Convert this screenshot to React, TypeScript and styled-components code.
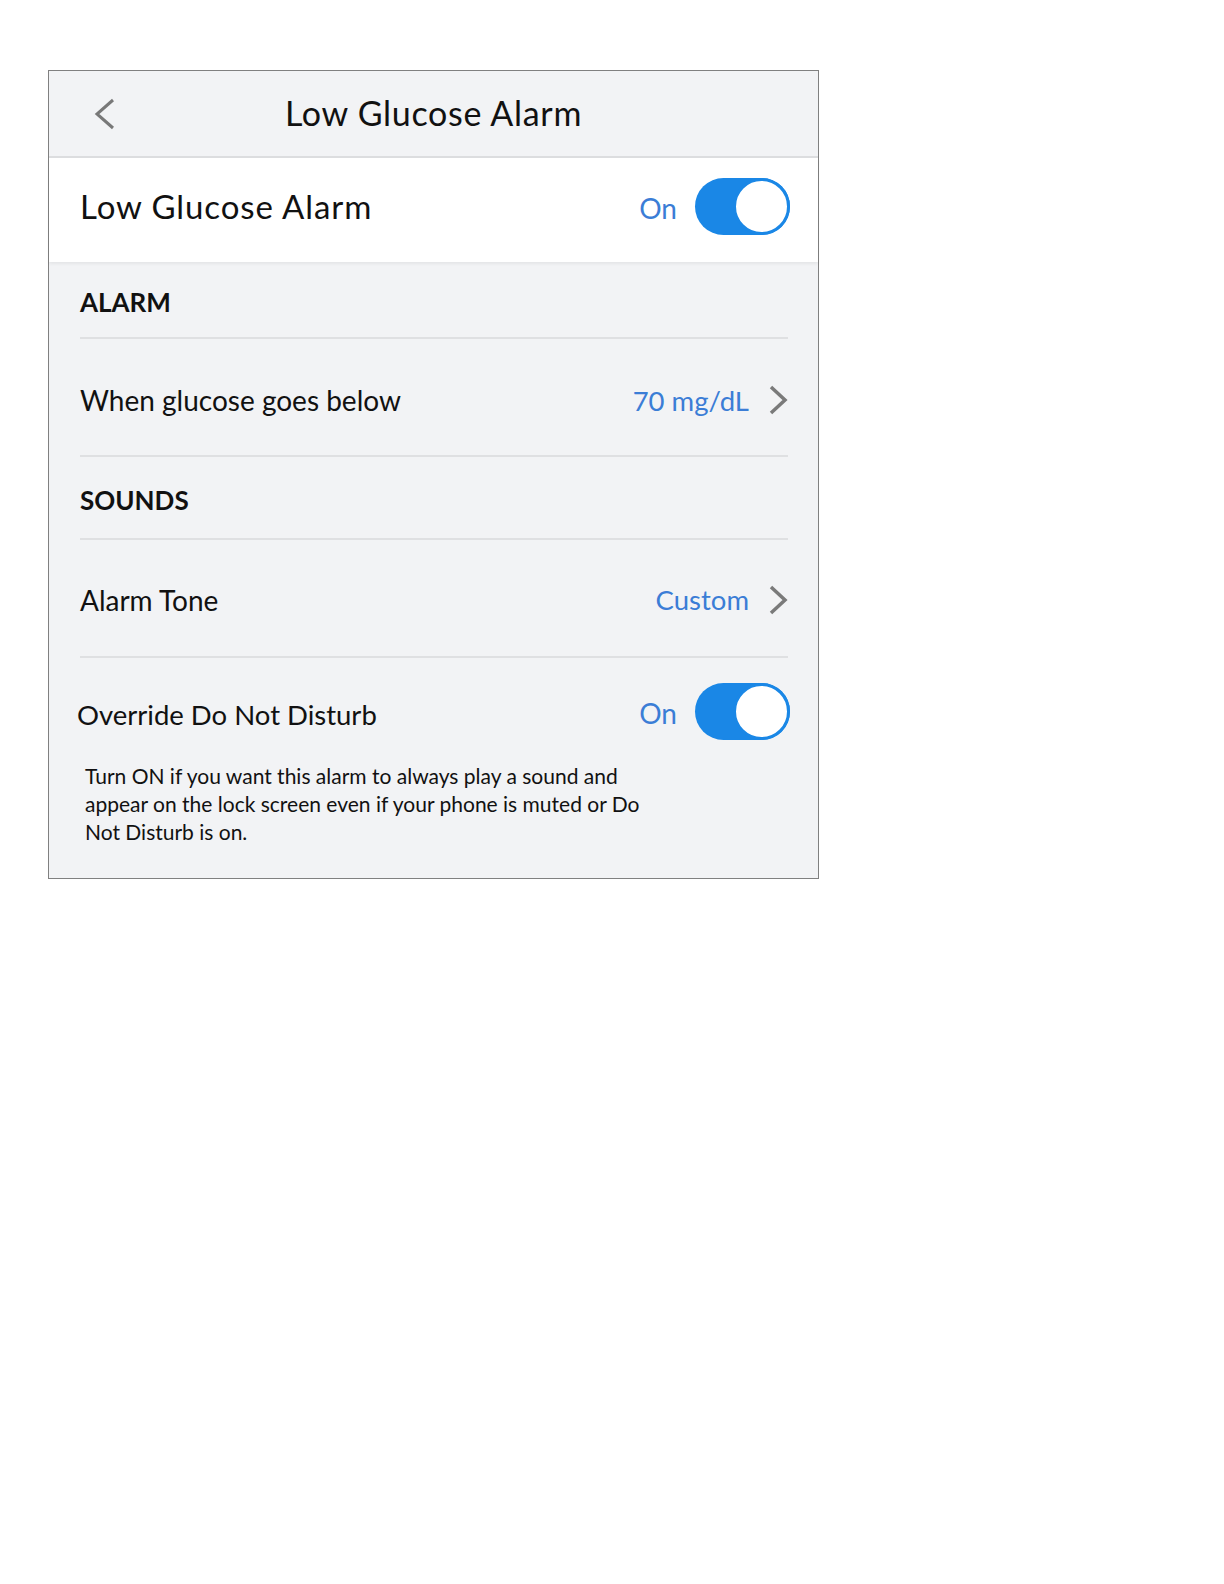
import styled, { createGlobalStyle } from "styled-components";

const GlobalStyle = createGlobalStyle`
  body {
    margin: 0;
    background: #ffffff;
    font-family: "Lato", "Open Sans", sans-serif;
    color: #111111;
  }
`;

function BackIcon() {
  return (
    <svg width="24" height="32" viewBox="0 0 24 32">
      <path d="M20 2 L4 16 L20 30" fill="none" stroke="#787878" strokeWidth="3" />
    </svg>
  );
}

function Chevron() {
  return (
    <svg width="20" height="30" viewBox="0 0 20 30">
      <path d="M3 2 L17 15 L3 28" fill="none" stroke="#7a7a7a" strokeWidth="3.5" />
    </svg>
  );
}

function Toggle({ label }: { label: string }) {
  return (
    <SwitchWrap>
      <OnLabel>{label}</OnLabel>
      <Track>
        <Knob />
      </Track>
    </SwitchWrap>
  );
}

export default function App() {
  return (
    <>
      <GlobalStyle />
      <Page>
        <Frame>
          <Header>
            <BackButton>
              <BackIcon />
            </BackButton>
            <Title>Low Glucose Alarm</Title>
          </Header>
          <MainRow>
            <MainLabel>Low Glucose Alarm</MainLabel>
            <Toggle label="On" />
          </MainRow>
          <Section>
            <SectionHead $height={75}>ALARM</SectionHead>
            <Divider />
            <LinkRow $height={116} $offset={6}>
              <RowLabel>When glucose goes below</RowLabel>
              <Value>
                <ValueText>70 mg/dL</ValueText>
                <Chevron />
              </Value>
            </LinkRow>
            <Divider />
            <SectionHead $height={81}>SOUNDS</SectionHead>
            <Divider />
            <LinkRow $height={116} $offset={3}>
              <RowLabel>Alarm Tone</RowLabel>
              <Value>
                <ValueText>Custom</ValueText>
                <Chevron />
              </Value>
            </LinkRow>
            <Divider />
            <OverrideBlock>
              <OverrideRow>
                <OverrideLabel>Override Do Not Disturb</OverrideLabel>
                <Toggle label="On" />
              </OverrideRow>
              <Description>
                Turn ON if you want this alarm to always play a sound and appear on the lock
                screen even if your phone is muted or Do Not Disturb is on.
              </Description>
            </OverrideBlock>
          </Section>
        </Frame>
      </Page>
    </>
  );
}

const Page = styled.div`
  padding: 70px 0 0 48px;
`;

const Frame = styled.div`
  width: 769px;
  height: 807px;
  border: 1px solid #808080;
  background: #f2f3f5;
  display: flex;
  flex-direction: column;
`;

const Header = styled.div`
  position: relative;
  height: 85px;
  display: flex;
  align-items: center;
  justify-content: center;
  border-bottom: 2px solid #dcdddf;
`;

const BackButton = styled.div`
  position: absolute;
  left: 44px;
  top: 27px;
  display: flex;
`;

const Title = styled.div`
  font-size: 34px;
  letter-spacing: 0.7px;
  margin-top: -2px;
`;

const MainRow = styled.div`
  height: 104px;
  box-sizing: border-box;
  background: #ffffff;
  display: flex;
  align-items: center;
  justify-content: space-between;
  padding: 0 28px 7px 31px;
  box-shadow: 0 2px 3px rgba(0, 0, 0, 0.06);
  position: relative;
`;

const MainLabel = styled.div`
  font-size: 33px;
  letter-spacing: 0.9px;
  margin-top: -2px;
`;

const SwitchWrap = styled.div`
  display: flex;
  align-items: center;
  gap: 18px;
`;

const OnLabel = styled.span`
  font-size: 28px;
  color: #3b7dd6;
  margin-top: 2px;
`;

const Track = styled.div`
  width: 95px;
  height: 57px;
  border-radius: 29px;
  background: #1a87e6;
  display: flex;
  justify-content: flex-end;
`;

const Knob = styled.div`
  box-sizing: border-box;
  width: 57px;
  height: 57px;
  border-radius: 50%;
  background: #ffffff;
  border: 3px solid #1a87e6;
`;

const Section = styled.div`
  flex: 1;
  display: flex;
  flex-direction: column;
`;

const SectionHead = styled.div<{ $height: number }>`
  height: ${(p) => p.$height}px;
  display: flex;
  align-items: center;
  padding-left: 31px;
  font-size: 26px;
  font-weight: 700;
  padding-top: 4px;
  box-sizing: border-box;
`;

const Divider = styled.div`
  height: 2px;
  margin: 0 30px 0 31px;
  background: #dfe0e2;
`;

const LinkRow = styled.div<{ $height: number; $offset: number }>`
  height: ${(p) => p.$height}px;
  display: flex;
  align-items: center;
  justify-content: space-between;
  padding: ${(p) => p.$offset}px 30px 0 31px;
  box-sizing: border-box;
`;

const RowLabel = styled.div`
  font-size: 28px;
`;

const Value = styled.div`
  display: flex;
  align-items: center;
  gap: 19px;
`;

const ValueText = styled.span`
  font-size: 27.5px;
  color: #3b7dd6;
`;

const OverrideBlock = styled.div`
  flex: 1;
  padding: 25px 28px 0 28px;
`;

const OverrideRow = styled.div`
  display: flex;
  align-items: center;
  justify-content: space-between;
`;

const OverrideLabel = styled.div`
  font-size: 27.5px;
  margin-top: 6px;
`;

const Description = styled.p`
  margin: 22px 0 0 8px;
  width: 560px;
  font-size: 21px;
  line-height: 28px;
`;
